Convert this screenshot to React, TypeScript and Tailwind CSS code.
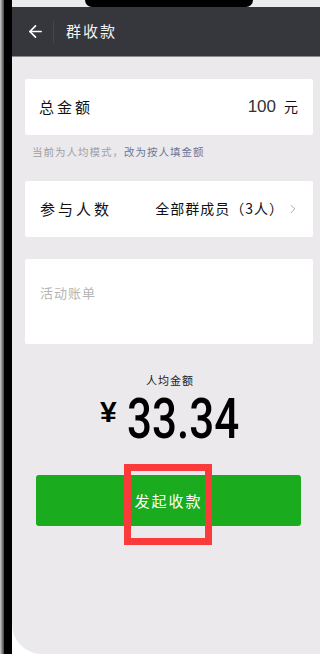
import { ArrowLeft, ChevronRight } from 'lucide-react';

const cjk = { fontFamily: '"Noto Sans CJK SC", "Noto Sans", sans-serif' };

export default function App() {
  return (
    <div className="relative w-[320px] h-[654px] overflow-hidden bg-white flex" style={cjk}>
      {/* phone bezel */}
      <div className="w-[4px] h-full bg-gradient-to-r from-[#d0d0d0] to-[#444]" />
      <div className="w-[8px] h-full bg-black" />

      <div className="relative flex-1 h-full flex flex-col bg-[#ebe9ec] rounded-bl-[30px] overflow-hidden">
        {/* status strip + notch */}
        <div className="h-[7px] bg-[#ebebeb] relative">
          <div className="absolute left-[73px] top-0 w-[168px] h-[7px] bg-black rounded-b-[7px]" />
        </div>

        {/* header */}
        <div className="h-[50px] bg-[#36373c] flex items-center border-b border-[#8a8a8f]">
          <ArrowLeft className="ml-[14px] w-[19px] h-[19px] text-white" strokeWidth={2.2} />
          <div className="ml-[8px] w-px h-[22px] bg-[#46474c]" />
          <span className="ml-[12px] text-[15px] text-[#f2f2f2] tracking-[2px]">群收款</span>
        </div>

        <div className="flex flex-col pl-[13px] pr-[7px] pt-[22px]">
          {/* total */}
          <div className="h-[56px] bg-white rounded-[2px] flex items-center justify-between pl-[14px] pr-[15px]">
            <span className="text-[15px] text-[#111] tracking-[3px]">总金额</span>
            <span className="flex items-baseline gap-[8px]">
              <span className="text-[17px] text-[#333]" style={{ fontFamily: '"Liberation Sans", sans-serif' }}>100</span>
              <span className="text-[14px] text-[#111]">元</span>
            </span>
          </div>

          <div className="mt-[9px] text-[10.5px] tracking-[1px] pl-[7px]">
            <span className="text-[#a0a0a4]">当前为人均模式，</span>
            <span className="text-[#6b7798]">改为按人填金额</span>
          </div>

          {/* participants */}
          <div className="mt-[21px] h-[56px] bg-white rounded-[2px] flex items-center justify-between pl-[15px] pr-[13px]">
            <span className="text-[15px] text-[#111] tracking-[3px]">参与人数</span>
            <span className="flex items-center">
              <span className="text-[14px] text-[#111] tracking-[1px]">全部群成员（3人）</span>
              <ChevronRight className="ml-[2px] w-[14px] h-[14px] text-[#9a9a9a]" strokeWidth={1.5} />
            </span>
          </div>

          {/* bill */}
          <div className="mt-[22px] h-[85px] bg-white rounded-[2px] pl-[15px] pt-[20px]">
            <span className="text-[13px] text-[#b5b5b5] tracking-[1px]">活动账单</span>
          </div>

          {/* per person */}
          <div className="mt-[28px] flex flex-col items-center pl-[2px]">
            <span className="text-[11px] text-[#222] tracking-[1px]">人均金额</span>
            <div className="mt-[6px] flex items-start">
              <span className="mt-[3px] text-[30px] leading-[30px] font-bold text-black" style={{ fontFamily: '"Liberation Sans", sans-serif' }}>¥</span>
              <span
                className="ml-[10px] text-[55px] leading-[50px] font-medium text-black scale-x-[0.8] origin-left -mr-[27px]"
                style={{ fontFamily: 'Roboto, "Liberation Sans", sans-serif' }}
              >
                33.34
              </span>
            </div>
          </div>

          {/* button */}
          <div className="mt-[31px] ml-[11px] mr-[12px] h-[51px] rounded-[3px] bg-[#1aab1f] flex items-center justify-center">
            <span className="text-[15px] text-white tracking-[2px]">发起收款</span>
          </div>
        </div>

        {/* red highlight */}
        <div className="absolute left-[112px] top-[464px] w-[88px] h-[81px] border-[7px] border-[#fb3b3b]" />
      </div>
    </div>
  );
}
